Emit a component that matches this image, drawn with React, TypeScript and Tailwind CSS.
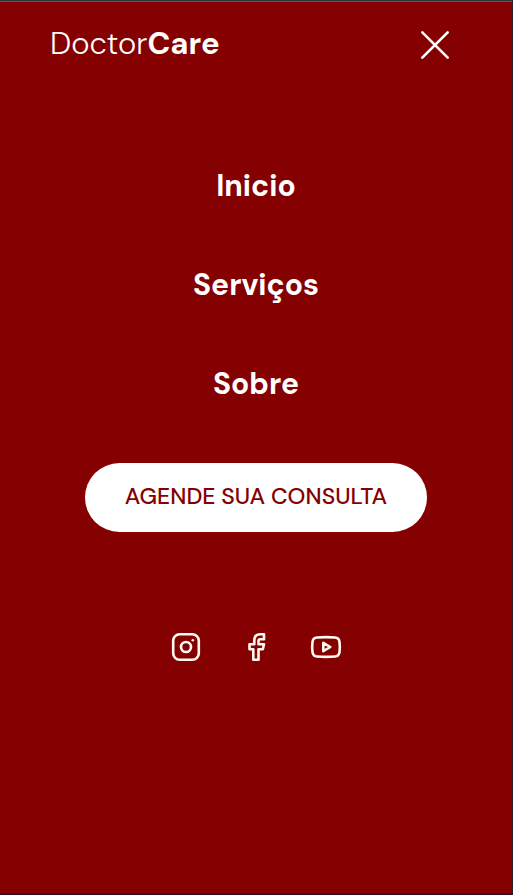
const links = [
  { label: "Inicio", href: "#home" },
  { label: "Serviços", href: "#services" },
  { label: "Sobre", href: "#about" },
];

function Logo() {
  return (
    <a href="#home" className="pb-0.5 text-[31px] leading-9 font-light text-white">
      Doctor<span className="font-bold">Care</span>
    </a>
  );
}

function SocialLinks() {
  return (
    <ul className="mt-[99px] flex gap-[38px] text-[#fffaf1]">
      <li>
        <a href="#instagram" aria-label="Instagram">
          <svg viewBox="0 0 32 32" className="size-8" fill="none" stroke="currentColor" strokeWidth="2.6">
            <rect x="3.2" y="3.2" width="25.6" height="25.6" rx="6.5" />
            <circle cx="16" cy="16" r="5" />
            <circle cx="22.8" cy="9.2" r="1.3" fill="currentColor" stroke="none" />
          </svg>
        </a>
      </li>
      <li>
        <a href="#facebook" aria-label="Facebook">
          <svg viewBox="0 0 32 32" className="size-8" fill="none" stroke="currentColor" strokeWidth="2.6" strokeLinejoin="round">
            <path d="M24 3.2h-3.5c-4 0-6.2 2.5-6.2 6.3v3.7H9.5v5.1h3.8v10.5h5.2V18.3h4.3l1.200-5.100h-5.500V9.800c0-1 .6-1.600 1.600-1.600H24z" />
          </svg>
        </a>
      </li>
      <li>
        <a href="#youtube" aria-label="YouTube">
          <svg viewBox="0 0 32 32" className="size-8" fill="none" stroke="currentColor" strokeWidth="2.6" strokeLinejoin="round">
            <path d="M7 6.5Q16 5.7 25 6.5Q29 6.8 29.5 10.8Q30.2 16 29.5 21.2Q29 25.2 25 25.5Q16 26.3 7 25.5Q3 25.2 2.5 21.2Q1.8 16 2.5 10.8Q3 6.8 7 6.5z" />
            <path d="M13.3 11.8v8.4l7-4.2z" />
          </svg>
        </a>
      </li>
    </ul>
  );
}

export default function App() {
  return (
    <div className="flex min-h-screen flex-col border-t border-r border-b-2 border-t-[#2b333d] border-r-[#20232d] border-b-[#3b0c20] bg-[#850000] font-['DM_Sans',Inter,sans-serif]">
      <header className="flex items-center justify-between border-t border-[#66545c] pt-[19px] pr-[53px] pl-[50px]">
        <Logo />
        <button type="button" aria-label="Fechar menu" className="text-white">
          <svg viewBox="0 0 48 48" className="size-12" fill="none" stroke="currentColor" strokeWidth="2.6" strokeLinecap="round">
            <path d="M11.3 11.3 36.7 36.7M36.7 11.3 11.3 36.7" />
          </svg>
        </button>
      </header>
      <nav className="mt-[97px] flex flex-col items-center">
        <ul className="flex flex-col items-center gap-[60px]">
          {links.map((link) => (
            <li key={link.label}>
              <a href={link.href} className="block text-[30px] leading-[39px] font-bold text-white">
                {link.label}
              </a>
            </li>
          ))}
        </ul>
        <button
          type="button"
          className="mt-[60px] rounded-full bg-white px-10 pt-[18px] pb-5 text-[23px] leading-[31px] font-medium text-[#850000]"
        >
          AGENDE SUA CONSULTA
        </button>
        <SocialLinks />
      </nav>
    </div>
  );
}
